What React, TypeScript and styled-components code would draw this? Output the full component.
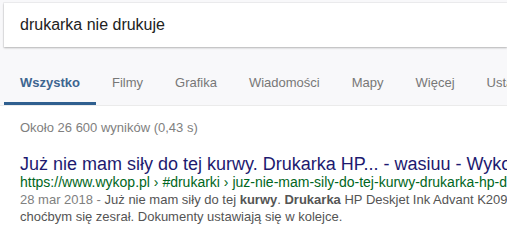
import styled, { createGlobalStyle } from "styled-components";

const linkBlue = "#1d1a70";
const tabBlue = "#2f5f8f";
const urlGreen = "#006621";
const snippetGray = "#545454";

const Global = createGlobalStyle`
  html, body {
    margin: 0;
    padding: 0;
    background: #ffffff;
    font-family: "Liberation Sans", Arial, sans-serif;
    overflow: hidden;
  }
`;

const Header = styled.div`
  background: #f8f8fa;
  border-bottom: 1px solid #ebebeb;
  padding-top: 3px;
`;

const SearchBox = styled.div`
  display: flex;
  align-items: center;
  height: 44px;
  margin-left: 4px;
  padding-left: 16px;
  background: #ffffff;
  box-shadow: 0 1px 2px rgba(0, 0, 0, 0.25), 0 0 0 1px rgba(0, 0, 0, 0.04);
  font-size: 16px;
  color: #222;
`;

const Tabs = styled.div`
  display: flex;
  margin-top: 23px;
  padding-left: 4px;
  white-space: nowrap;
`;

const Tab = styled.div<{ active?: boolean }>`
  padding: 5px 16px 0 16px;
  height: 35px;
  display: flex;
  align-items: flex-start;
  box-sizing: border-box;
  font-size: 13px;
  color: ${(p) => (p.active ? "#3d6590" : "#777")};
  font-weight: ${(p) => (p.active ? "bold" : "normal")};
  border-bottom: 3px solid ${(p) => (p.active ? tabBlue : "transparent")};
`;

const Results = styled.div`
  padding: 14px 0 0 20px;
  white-space: nowrap;
`;

const Stats = styled.div`
  font-size: 13px;
  color: #808080;
`;

const Result = styled.div`
  margin-top: 20px;
`;

const Title = styled.div`
  font-size: 18px;
  color: ${linkBlue};
  line-height: 19px;
`;

const Url = styled.div`
  font-size: 14px;
  color: ${urlGreen};
  line-height: 17px;
`;

const Snippet = styled.div`
  font-size: 13px;
  color: ${snippetGray};
  line-height: 17px;
  b {
    color: #555;
  }
`;

const Date = styled.span`
  color: #808080;
`;

const tabs = ["Wszystko", "Filmy", "Grafika", "Wiadomości", "Mapy", "Więcej", "Ustawienia"];

export default function App() {
  return (
    <>
      <Global />
      <Header>
        <SearchBox>drukarka nie drukuje</SearchBox>
        <Tabs>
          {tabs.map((t, i) => (
            <Tab key={t} active={i === 0}>
              {t}
            </Tab>
          ))}
        </Tabs>
      </Header>
      <Results>
        <Stats>Około 26 600 wyników (0,43 s)</Stats>
        <Result>
          <Title>Już nie mam siły do tej kurwy. Drukarka HP... - wasiuu - Wykop.pl</Title>
          <Url>https://www.wykop.pl › #drukarki › juz-nie-mam-sily-do-tej-kurwy-drukarka-hp-deskjet</Url>
          <Snippet>
            <Date>28 mar 2018 - </Date>Już nie mam siły do tej <b>kurwy</b>. <b>Drukarka</b> HP Deskjet Ink Advant K209a
          </Snippet>
          <Snippet>choćbym się zesrał. Dokumenty ustawiają się w kolejce.</Snippet>
        </Result>
      </Results>
    </>
  );
}
